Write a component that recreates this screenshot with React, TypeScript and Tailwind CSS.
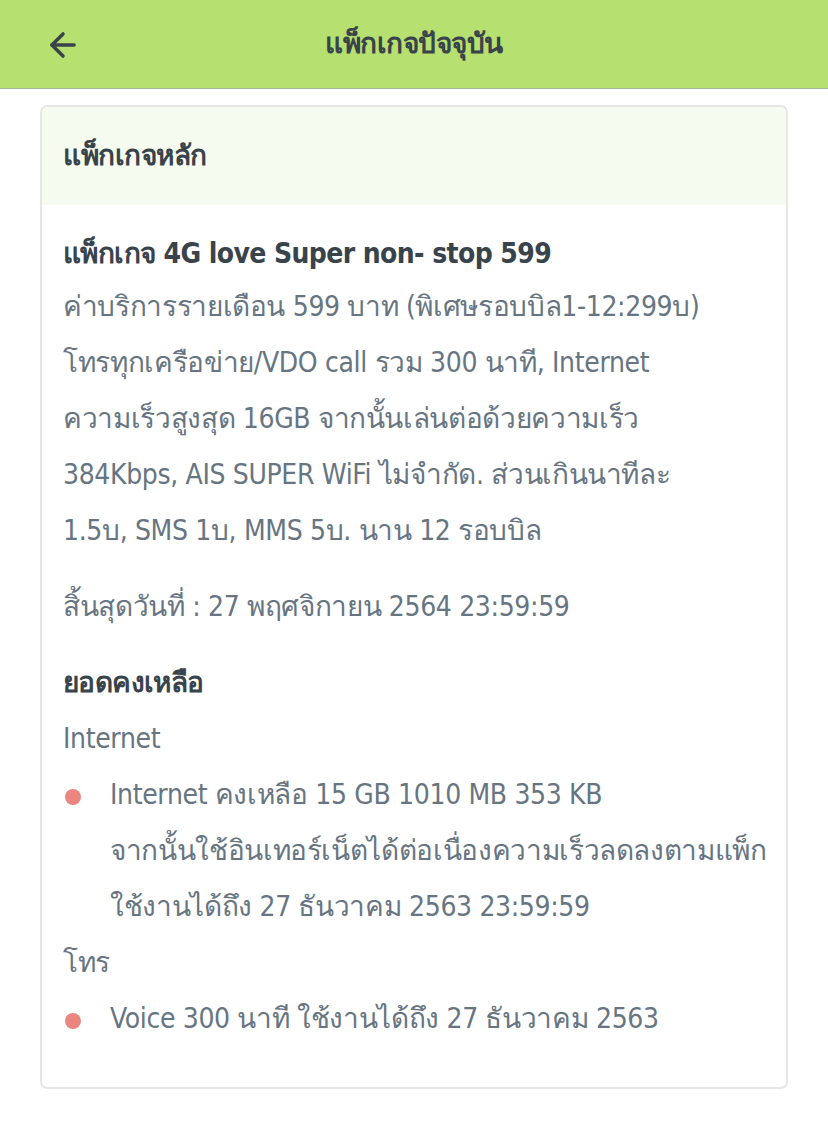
import { ArrowLeft } from 'lucide-react';

const font = { fontFamily: '"DejaVu Sans Condensed", "Noto Sans", "Liberation Sans", sans-serif' };

function Bullet({ children }: { children: React.ReactNode }) {
  return (
    <div className="flex">
      <div className="w-[47px] shrink-0 flex items-start pt-[22px]">
        <span className="w-[16px] h-[16px] rounded-full bg-[#ea8580] ml-[2px]" />
      </div>
      <div>{children}</div>
    </div>
  );
}

export default function App() {
  return (
    <div className="min-h-[1127px] bg-white text-[#677582]" style={font}>
      {/* Header */}
      <div className="h-[89px] bg-[#b6e06f] border-b border-[#a9b79a] relative flex items-center justify-center">
        <ArrowLeft className="absolute left-[44px] top-[26px] text-[#38434b]" size={38} strokeWidth={2.2} />
        <h1 className="text-[28px] font-bold text-[#38434b] tracking-[-0.5px]">แพ็กเกจปัจจุบัน</h1>
      </div>

      <div className="px-[40px] pt-[16px]">
        <div className="border-2 border-[#e6e6e6] rounded-[7px] overflow-hidden">
          <div className="bg-[#f5fcef] h-[98px] px-[21px] flex items-center">
            <h2 className="text-[28px] font-bold text-[#38434b] tracking-[-0.5px]">แพ็กเกจหลัก</h2>
          </div>

          <div className="px-[21px] pt-[24px] pb-[40px] text-[28px] leading-[56px] tracking-[-0.35px] whitespace-nowrap">
            <div className="font-bold text-[#38434b] leading-[50px] tracking-[-0.6px]">แพ็กเกจ 4G love Super non- stop 599</div>
            <div>ค่าบริการรายเดือน 599 บาท (พิเศษรอบบิล1-12:299บ)</div>
            <div>โทรทุกเครือข่าย/VDO call รวม 300 นาที, Internet</div>
            <div>ความเร็วสูงสุด 16GB จากนั้นเล่นต่อด้วยความเร็ว</div>
            <div>384Kbps, AIS SUPER WiFi ไม่จำกัด. ส่วนเกินนาทีละ</div>
            <div>1.5บ, SMS 1บ, MMS 5บ. นาน 12 รอบบิล</div>
            <div className="mt-[20px]">สิ้นสุดวันที่ : 27 พฤศจิกายน 2564 23:59:59</div>

            <div className="mt-[20px] font-bold text-[#38434b] tracking-[-0.6px]">ยอดคงเหลือ</div>
            <div>Internet</div>
            <Bullet>
              <div>Internet คงเหลือ 15 GB 1010 MB 353 KB</div>
              <div>จากนั้นใช้อินเทอร์เน็ตได้ต่อเนื่องความเร็วลดลงตามแพ็ก</div>
              <div>ใช้งานได้ถึง 27 ธันวาคม 2563 23:59:59</div>
            </Bullet>
            <div>โทร</div>
            <Bullet>
              <div>Voice 300 นาที ใช้งานได้ถึง 27 ธันวาคม 2563</div>
            </Bullet>
          </div>
        </div>
      </div>
    </div>
  );
}
